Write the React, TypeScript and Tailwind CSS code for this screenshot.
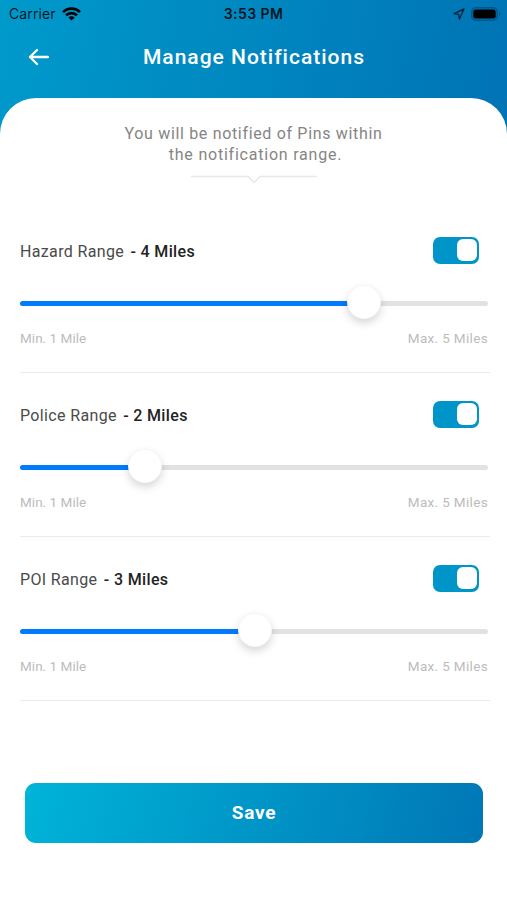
import { useState } from "react";

const dataRanges = [
  { name: "Hazard", miles: 4, percent: 73.4 },
  { name: "Police", miles: 2, percent: 26.7 },
  { name: "POI", miles: 3, percent: 50.2 },
];

const StatusBar = () => (
  <div className="flex h-7 items-center px-[9px] font-['Inter',sans-serif] text-[14px] leading-none text-black/85">
    <div className="flex flex-1 items-center gap-[6px]">
      <span className="tracking-[0.1px]">Carrier</span>
      <svg width="19" height="14" viewBox="0 0 19 14" fill="none" stroke="#000" strokeWidth="2.7">
        <path d="M1 5.1C5.7.4 13.3.4 18 5.1" />
        <path d="M4 8.3c3.1-3 7.9-3 11 0" />
        <path d="M9.5 13.6 6.4 10.5c1.8-1.6 4.4-1.6 6.2 0z" fill="#000" stroke="none" />
      </svg>
    </div>
    <span className="font-semibold tracking-[0.45px]">3:53 PM</span>
    <div className="flex flex-1 items-center justify-end gap-[6px]">
      <svg width="12" height="12" viewBox="0 0 12 12" fill="none" stroke="#04263d" strokeWidth="1.4" strokeLinejoin="round">
        <path d="M11 1 1 5.6l4.6.8.8 4.6z" />
      </svg>
      <svg className="-mr-[3px]" width="30" height="14" viewBox="0 0 30 14">
        <rect x=".8" y=".8" width="25.4" height="12.4" rx="4" fill="none" stroke="#00558a" strokeWidth="1.6" />
        <rect x="2.3" y="2.5" width="22.4" height="9" rx="2.2" />
        <path d="M28 5v4c2-.7 2-3.3 0-4" fill="#00558a" />
      </svg>
    </div>
  </div>
);

const Toggle = () => {
  const [on, setOn] = useState(true);
  return (
    <button
      aria-pressed={on}
      onClick={() => setOn(!on)}
      className={`flex h-[27px] w-[46px] items-center rounded-[7px] px-[2.5px] ${on ? "justify-end bg-[#0095c8]" : "justify-start bg-gray-300"}`}
    >
      <span className="h-[22px] w-5 rounded-[6px] bg-white" />
    </button>
  );
};

type RangeProps = { name: string; miles: number; percent: number };

const RangeRow = ({ name, miles, percent }: RangeProps) => (
  <div className="h-[164px] border-b border-[#ebebeb] pt-[27px]">
    <div className="flex h-[28px] items-center justify-between pr-[11px]">
      <div className="pt-[3px] text-[16px] tracking-[0.35px] whitespace-pre text-[#4a4a4a]">
        {name} Range <span className="ml-[2px] font-medium text-[#222]">- {miles} Miles</span>
      </div>
      <Toggle />
    </div>
    <div className="mt-[22px] mr-[2px] flex h-[34px] items-center">
      <div className="h-[5px] rounded-l-full bg-[#007aff]" style={{ width: `calc(${percent}% - 16px)` }} />
      <div className="z-10 -mx-px mb-[2px] size-[34px] shrink-0 rounded-full border border-black/3 bg-white shadow-[0_4px_9px_rgba(0,0,0,0.16)]" />
      <div className="h-[5px] flex-1 rounded-r-full bg-[#e2e2e2]" />
    </div>
    <div className="mt-[8px] mr-[2px] flex justify-between text-[13.5px] leading-5 text-[#bcbcbc]">
      <span className="tracking-[0.03px]">Min. 1 Mile</span>
      <span className="tracking-[0.34px]">Max. 5 Miles</span>
    </div>
  </div>
);

const App = () => {
  return (
    <div className="h-[900px] w-full overflow-hidden bg-white font-['Roboto',sans-serif]">
      <div className="h-[134px] bg-linear-[100deg,#009acb,#0073b5]">
        <StatusBar />
        <div className="flex h-[58px] items-center pl-[28px]">
          <svg width="21" height="18" viewBox="0 0 21 18" fill="none" stroke="#fff" strokeWidth="2.3" strokeLinecap="round" strokeLinejoin="round">
            <path d="M20 9H2M9 2 2 9l7 7" />
          </svg>
          <div className="flex-1 pt-[2px] pr-[48px] text-center text-[21px] font-medium tracking-[1px] text-white">Manage Notifications</div>
        </div>
      </div>
      <div className="relative -mt-[36px] rounded-t-[36px] bg-white pr-[17px] pl-5">
        <div className="flex flex-col items-center pt-[25px] pr-[3px] text-center text-[16px] leading-[21px] text-[#858585]">
          <div className="tracking-[0.67px]">You will be notified of Pins within</div>
          <div className="pl-[4px] tracking-[0.78px]">the notification range.</div>
          <svg className="mt-[10px]" width="126" height="10" fill="none" stroke="#e8e8e8" strokeWidth="1.5">
            <path d="M0 1.5h57l6 6 6-6h57" />
          </svg>
        </div>
        <div className="pt-[24px]">
          {dataRanges.map((range) => (
            <RangeRow key={range.name} {...range} />
          ))}
        </div>
        <button className="mx-[5px] mt-[82px] flex h-[60px] w-[458px] items-center justify-center rounded-[11px] bg-linear-[105deg,#00b4d8,#0077b6] text-[19px] font-bold tracking-[0.8px] text-white">
          Save
        </button>
      </div>
    </div>
  );
};

export default App;
